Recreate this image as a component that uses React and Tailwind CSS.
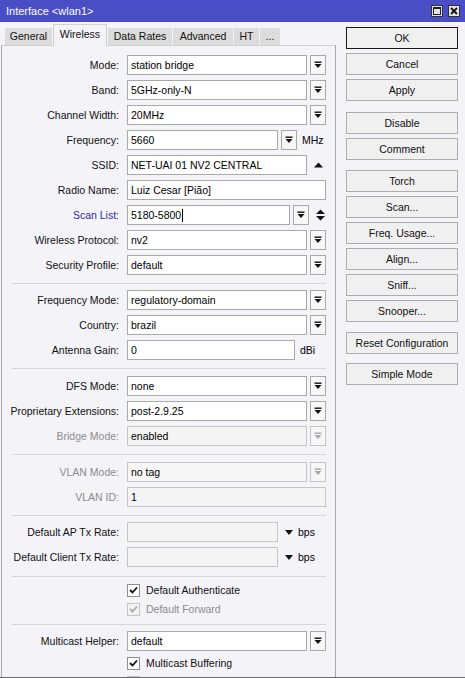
import React from "react";

const BORDER = "border-[#a9a9a9]";

function DropIcon({ color = "#111" }) {
  return (
    <svg width="8" height="8" viewBox="0 0 8 8">
      <rect x="0.5" y="0.5" width="7" height="1.4" fill={color} />
      <path d="M0.5 3 H7.5 L4 7 Z" fill={color} />
    </svg>
  );
}

function DropBtn({ disabled }) {
  return (
    <div className={`ml-[3px] w-[16px] h-[20px] border ${disabled ? "border-[#c4c4c4]" : BORDER} bg-[#f7f7f7] flex items-center justify-center shrink-0`}>
      <DropIcon color={disabled ? "#a8a8a8" : "#111"} />
    </div>
  );
}

function Input({ w = "w-[180px]", children, bg = "bg-white", disabled }) {
  return (
    <div className={`${w} h-[20px] border ${disabled ? "border-[#c4c4c4]" : BORDER} ${bg} flex items-center pl-[3px] whitespace-nowrap overflow-hidden shrink-0`}>
      {children}
    </div>
  );
}

function Row({ label, labelClass = "text-[#111]", children }) {
  return (
    <div className="flex items-center h-[20px] shrink-0">
      <div className={`w-[117px] text-right shrink-0 whitespace-nowrap ${labelClass}`}>{label}:</div>
      <div className="ml-[8px] flex items-center">{children}</div>
    </div>
  );
}

function Sep({ className = "mt-[3px] mb-[1px]" }) {
  return <div className={`ml-[10px] w-[314px] h-px bg-[#d6d6d6] shrink-0 ${className}`} />;
}

function Check({ label, disabled }) {
  return (
    <div className="flex items-center h-[14px] shrink-0">
      <div className={`ml-[125px] w-[13px] h-[13px] border ${disabled ? "border-[#c4c4c4] bg-[#f2f2f2]" : "border-[#8f8f8f] bg-white"} flex items-center justify-center shrink-0`}>
        <svg width="9" height="8" viewBox="0 0 9 8">
          <path d="M1 4 L3.5 6.5 L8 1.5" fill="none" stroke={disabled ? "#a8a8a8" : "#111"} strokeWidth="1.8" />
        </svg>
      </div>
      <div className={`ml-[6px] whitespace-nowrap ${disabled ? "text-[#8c8c8c]" : "text-[#111]"}`}>{label}</div>
    </div>
  );
}

function Btn({ children, className = "", ok }) {
  return (
    <div className={`w-[112px] h-[22px] border ${ok ? "border-[#1a1a1a]" : "border-[#adadad]"} bg-[#f0f0f0] flex items-center justify-center text-[#111] ${className}`}>
      {children}
    </div>
  );
}

function Tab({ children, w, active, first }) {
  if (active) {
    return (
      <div className={`${w} ${first ? "" : "ml-[1px]"} h-[22px] bg-[#f4f3f8] border-x border-t border-[#d0d0d0] relative z-10 -mb-px flex items-center justify-center text-[#111]`}>
        <span className="-mt-[2px]">{children}</span>
      </div>
    );
  }
  return (
    <div className={`${w} ${first ? "" : "ml-[1px]"} h-[17px] bg-[#dcdcdc] flex items-center justify-center text-[#111]`}>
      {children}
    </div>
  );
}

export default function App() {
  return (
    <div className="w-[465px] h-[678px] overflow-hidden bg-[#f4f3f8] flex flex-col text-[10.5px] leading-none font-['Liberation_Sans',Arial,sans-serif] border-b border-[#6a6a6a]">
      {/* Title bar */}
      <div className="h-[22px] bg-[#4a4ec6] flex items-center pl-[6px] pr-[5px] shrink-0">
        <div className="text-white text-[11px]">Interface &lt;wlan1&gt;</div>
        <div className="ml-auto flex items-center gap-[5px]">
          <div className="w-[12px] h-[12px] bg-[#e4e4e4] border border-[#303030] flex items-center justify-center">
            <div className="w-[8px] h-[8px] border border-[#202020] border-t-2" />
          </div>
          <div className="w-[12px] h-[12px] bg-[#e4e4e4] border border-[#303030] flex items-center justify-center">
            <svg width="8" height="8" viewBox="0 0 8 8">
              <path d="M1 1 L7 7 M7 1 L1 7" stroke="#111" strokeWidth="1.8" />
            </svg>
          </div>
        </div>
      </div>

      <div className="flex flex-1 min-h-0">
        {/* Left column */}
        <div className="w-[336px] flex flex-col shrink-0">
          <div className="h-[23px] flex items-end pl-[5px] shrink-0">
            <Tab w="w-[47px]" first>General</Tab>
            <Tab w="w-[54px]" active>Wireless</Tab>
            <Tab w="w-[64px]">Data Rates</Tab>
            <Tab w="w-[60px]">Advanced</Tab>
            <Tab w="w-[25px]">HT</Tab>
            <Tab w="w-[20px]">...</Tab>
          </div>
          <div className="ml-[1px] w-[335px] flex-1 border-x border-t border-[#a8a8a8] border-t-[#d0d0d0] pt-[9px] flex flex-col gap-[5px] overflow-hidden">
            <Row label="Mode">
              <Input>station bridge</Input>
              <DropBtn />
            </Row>
            <Row label="Band">
              <Input>5GHz-only-N</Input>
              <DropBtn />
            </Row>
            <Row label="Channel Width">
              <Input>20MHz</Input>
              <DropBtn />
            </Row>
            <Row label="Frequency">
              <Input w="w-[151px]">5660</Input>
              <DropBtn />
              <span className="ml-[5px]">MHz</span>
            </Row>
            <Row label="SSID">
              <Input>NET-UAI 01 NV2 CENTRAL</Input>
              <svg className="ml-[7px]" width="9" height="6" viewBox="0 0 9 6">
                <path d="M0 5.5 H9 L4.5 0.5 Z" fill="#111" />
              </svg>
            </Row>
            <Row label="Radio Name">
              <Input w="w-[199px]">Luiz Cesar [Pião]</Input>
            </Row>
            <Row label="Scan List" labelClass="text-[#2b2bb0]">
              <Input w="w-[163px]">
                5180-5800<span className="inline-block w-px h-[13px] bg-black ml-px" />
              </Input>
              <DropBtn />
              <svg className="ml-[7px]" width="9" height="12" viewBox="0 0 9 12">
                <path d="M0 5 H9 L4.5 0.5 Z M0 7 H9 L4.5 11.5 Z" fill="#111" />
              </svg>
            </Row>
            <Row label="Wireless Protocol">
              <Input>nv2</Input>
              <DropBtn />
            </Row>
            <Row label="Security Profile">
              <Input>default</Input>
              <DropBtn />
            </Row>
            <Sep />
            <Row label="Frequency Mode">
              <Input>regulatory-domain</Input>
              <DropBtn />
            </Row>
            <Row label="Country">
              <Input>brazil</Input>
              <DropBtn />
            </Row>
            <Row label="Antenna Gain">
              <Input w="w-[168px]">0</Input>
              <span className="ml-[5px]">dBi</span>
            </Row>
            <Sep className="mt-[3px] mb-[2px]" />
            <Row label="DFS Mode">
              <Input>none</Input>
              <DropBtn />
            </Row>
            <Row label="Proprietary Extensions">
              <Input>post-2.9.25</Input>
              <DropBtn />
            </Row>
            <Row label="Bridge Mode" labelClass="text-[#8c8c8c]">
              <Input bg="bg-[#f4f4f4]" disabled>enabled</Input>
              <DropBtn disabled />
            </Row>
            <Sep className="mt-[3px] mb-[2px]" />
            <Row label="VLAN Mode" labelClass="text-[#8c8c8c]">
              <Input bg="bg-[#f7f7f7]" disabled>no tag</Input>
              <DropBtn disabled />
            </Row>
            <Row label="VLAN ID" labelClass="text-[#8c8c8c]">
              <Input w="w-[199px]" bg="bg-[#f4f4f4]" disabled>1</Input>
            </Row>
            <Sep />
            <Row label="Default AP Tx Rate">
              <Input w="w-[151px]" bg="bg-[#f4f4f4]" disabled></Input>
              <svg className="ml-[7px]" width="8" height="5" viewBox="0 0 8 5">
                <path d="M0 0 H8 L4 5 Z" fill="#111" />
              </svg>
              <span className="ml-[5px]">bps</span>
            </Row>
            <Row label="Default Client Tx Rate">
              <Input w="w-[151px]" bg="bg-[#f4f4f4]" disabled></Input>
              <svg className="ml-[7px]" width="8" height="5" viewBox="0 0 8 5">
                <path d="M0 0 H8 L4 5 Z" fill="#111" />
              </svg>
              <span className="ml-[5px]">bps</span>
            </Row>
            <Sep className="mt-[4px] mb-[1px]" />
            <Check label="Default Authenticate" />
            <Check label="Default Forward" disabled />
            <Sep />
            <Row label="Multicast Helper">
              <Input>default</Input>
              <DropBtn />
            </Row>
            <Check label="Multicast Buffering" />
            <Check label="" disabled />
          </div>
        </div>

        {/* Right column */}
        <div className="ml-[10px] pt-[5px] flex flex-col gap-[4px]">
          <Btn ok>OK</Btn>
          <Btn>Cancel</Btn>
          <Btn>Apply</Btn>
          <Btn className="mt-[7px]">Disable</Btn>
          <Btn>Comment</Btn>
          <Btn className="mt-[6px]">Torch</Btn>
          <Btn>Scan...</Btn>
          <Btn>Freq. Usage...</Btn>
          <Btn>Align...</Btn>
          <Btn>Sniff...</Btn>
          <Btn>Snooper...</Btn>
          <Btn className="mt-[6px]">Reset Configuration</Btn>
          <Btn className="mt-[5px]">Simple Mode</Btn>
        </div>
      </div>
    </div>
  );
}
